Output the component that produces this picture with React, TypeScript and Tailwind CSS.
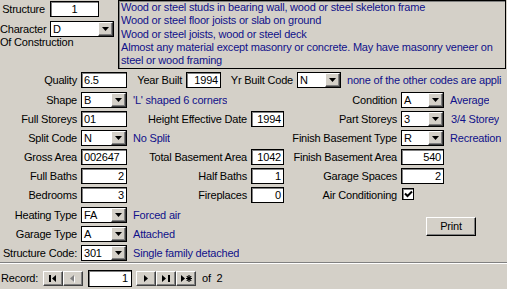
import React from "react";

type Kids = { children?: React.ReactNode };

const Label = ({ w, children }: { w: string } & Kids) => (
  <div className={`${w} h-4 shrink-0 flex items-center justify-end pr-[4px] whitespace-nowrap`}>
    {children}
  </div>
);

const Box = ({ w, value, align = "left" }: { w: string; value: string; align?: "left" | "right" | "center" }) => (
  <div
    className={`${w} h-4 shrink-0 bg-white border border-black shadow-[inset_1px_1px_0_#808080] flex items-center px-[2px] ${
      align === "right" ? "justify-end" : align === "center" ? "justify-center" : ""
    }`}
  >
    {value}
  </div>
);

const DropBtn = () => (
  <div className="w-[15px] h-full bg-[#d4d0c8] border-t border-l border-t-white border-l-white border-b border-r border-b-[#404040] border-r-[#404040] shadow-[inset_-1px_-1px_0_#808080] flex items-center justify-center">
    <svg width="7" height="4" viewBox="0 0 7 4">
      <path d="M0 0h7L3.5 4z" fill="#000" />
    </svg>
  </div>
);

const Combo = ({ w, value }: { w: string; value: string }) => (
  <div className={`${w} h-4 shrink-0 bg-white border border-black flex`}>
    <div className="flex-1 pl-[2px] flex items-center">{value}</div>
    <DropBtn />
  </div>
);

const Note = ({ cls = "", children }: { cls?: string } & Kids) => (
  <div className={`h-4 flex items-center text-[#10108a] whitespace-nowrap overflow-hidden ${cls}`}>{children}</div>
);

const Seg2 = ({ children }: Kids) => <div className="w-[168px] shrink-0 flex">{children}</div>;

const Check = () => (
  <div className="ml-px mt-px w-[12px] h-[12px] bg-white border border-black shadow-[inset_1px_1px_0_#808080] flex items-center justify-center">
    <svg width="9" height="8" viewBox="0 0 9 8">
      <path d="M1 3.5l2.5 2.5L8 1.5" stroke="#000" strokeWidth="2" fill="none" />
    </svg>
  </div>
);

const NavBtn = ({ children }: Kids) => (
  <div className="w-[20px] h-[15px] shrink-0 bg-[#d4d0c8] border-t border-l border-t-white border-l-white border-b border-r border-b-[#404040] border-r-[#404040] shadow-[inset_-1px_-1px_0_#808080] flex items-center justify-center">
    {children}
  </div>
);

const App = () => {
  return (
    <div className="w-[507px] h-[289px] overflow-hidden bg-[#d4d0c8] text-black font-['Liberation_Sans',Arial,sans-serif] text-[11px] tracking-[-0.2px] leading-none">
      {/* header: structure / character + description */}
      <div className="flex h-[69px]">
        <div className="w-[118px] shrink-0">
          <div className="flex mt-px">
            <div className="w-[50px] h-4 flex items-center justify-end pr-[5px]">Structure</div>
            <Box w="w-[49px]" value="1" align="center" />
          </div>
          <div className="flex mt-[4px]">
            <div className="w-[50px] h-4 flex items-center">Character</div>
            <Combo w="w-[64px]" value="D" />
          </div>
          <div className="leading-[13px] -mt-px whitespace-nowrap">Of Construction</div>
        </div>
        <div className="w-[388px] h-[69px] border border-black shadow-[inset_1px_1px_0_#808080] px-[2px] leading-[13.25px] text-[#10108a]">
          <div>Wood or steel studs in bearing wall, wood or steel skeleton frame</div>
          <div>Wood or steel floor joists or slab on ground</div>
          <div>Wood or steel joists, wood or steel deck</div>
          <div>Almost any material except masonry or concrete. May have masonry veneer on</div>
          <div>steel or wood framing</div>
        </div>
      </div>

      {/* main rows */}
      <div className="flex flex-col gap-[3px] mt-[3px]">
        <div className="flex">
          <Label w="w-[81px]">Quality</Label>
          <Box w="w-[46px]" value="6.5" />
          <Label w="w-[59px]">Year Built</Label>
          <Box w="w-[35px]" value="1994" align="right" />
          <Label w="w-[76px]">Yr Built Code</Label>
          <Combo w="w-[44px]" value="N" />
          <Note cls="pl-[6px] w-[162px]">none of the other codes are appli</Note>
        </div>

        <div className="flex mt-px">
          <Label w="w-[81px]">Shape</Label>
          <Combo w="w-[46px]" value="B" />
          <Seg2>
            <Note cls="pl-[6px]">'L' shaped 6 corners</Note>
          </Seg2>
          <Label w="w-[106px]">Condition</Label>
          <Combo w="w-[43px]" value="A" />
          <Note cls="pl-[6px]">Average</Note>
        </div>

        <div className="flex">
          <Label w="w-[81px]">Full Storeys</Label>
          <Box w="w-[46px]" value="01" />
          <Seg2>
            <Label w="w-[124px]">Height Effective Date</Label>
            <Box w="w-[33px]" value="1994" align="right" />
          </Seg2>
          <Label w="w-[106px]">Part Storeys</Label>
          <Combo w="w-[43px]" value="3" />
          <Note cls="pl-[7px]">3/4 Storey</Note>
        </div>

        <div className="flex">
          <Label w="w-[81px]">Split Code</Label>
          <Combo w="w-[46px]" value="N" />
          <Seg2>
            <Note cls="pl-[6px]">No Split</Note>
          </Seg2>
          <Label w="w-[106px]">Finish Basement Type</Label>
          <Combo w="w-[43px]" value="R" />
          <Note cls="pl-[6px]">Recreation</Note>
        </div>

        <div className="flex">
          <Label w="w-[81px]">Gross Area</Label>
          <Box w="w-[46px]" value="002647" />
          <Seg2>
            <Label w="w-[124px]">Total Basement Area</Label>
            <Box w="w-[33px]" value="1042" align="right" />
          </Seg2>
          <Label w="w-[106px]">Finish Basement Area</Label>
          <Box w="w-[43px]" value="540" align="right" />
        </div>

        <div className="flex">
          <Label w="w-[81px]">Full Baths</Label>
          <Box w="w-[46px]" value="2" align="right" />
          <Seg2>
            <Label w="w-[124px]">Half Baths</Label>
            <Box w="w-[33px]" value="1" align="right" />
          </Seg2>
          <Label w="w-[106px]">Garage Spaces</Label>
          <Box w="w-[43px]" value="2" align="right" />
        </div>

        <div className="flex">
          <Label w="w-[81px]">Bedrooms</Label>
          <Box w="w-[46px]" value="3" align="right" />
          <Seg2>
            <Label w="w-[124px]">Fireplaces</Label>
            <Box w="w-[33px]" value="0" align="right" />
          </Seg2>
          <Label w="w-[106px]">Air Conditioning</Label>
          <Check />
        </div>
      </div>

      {/* lower rows + print */}
      <div className="flex mt-[4px]">
        <div className="w-[426px] shrink-0 flex flex-col gap-[3px]">
          <div className="flex">
            <Label w="w-[81px]">Heating Type</Label>
            <Combo w="w-[46px]" value="FA" />
            <Note cls="pl-[6px]">Forced air</Note>
          </div>
          <div className="flex">
            <Label w="w-[81px]">Garage Type</Label>
            <Combo w="w-[46px]" value="A" />
            <Note cls="pl-[6px]">Attached</Note>
          </div>
          <div className="flex">
            <Label w="w-[81px]">Structure Code:</Label>
            <Combo w="w-[46px]" value="301" />
            <Note cls="pl-[6px]">Single family detached</Note>
          </div>
        </div>
        <div className="mt-[10px] w-[50px] h-[19px] border-t border-l border-t-white border-l-white border-b border-r border-b-black border-r-black shadow-[inset_-1px_-1px_0_#808080] flex items-center justify-center">
          Print
        </div>
      </div>

      {/* record navigator */}
      <div className="mt-px h-px bg-[#808080]" />
      <div className="h-px bg-white" />
      <div className="flex items-center pt-[6px]">
        <div className="w-[43px] pl-px">Record:</div>
        <NavBtn>
          <svg width="8" height="7" viewBox="0 0 8 7">
            <path d="M0 0h2v7H0zM7 0v7L3 3.5z" fill="#000" />
          </svg>
        </NavBtn>
        <NavBtn>
          <svg width="6" height="8" viewBox="0 0 6 8">
            <path d="M5 1v7L1 4.5z" fill="#fff" />
            <path d="M4 0v7L0 3.5z" fill="#808080" />
          </svg>
        </NavBtn>
        <div className="ml-[5px] w-[44px] h-[17px] bg-white border border-black shadow-[inset_1px_1px_0_#808080] flex items-center justify-end pr-[3px]">
          1
        </div>
        <div className="ml-[4px] flex">
          <NavBtn>
            <svg width="4" height="7" viewBox="0 0 4 7">
              <path d="M0 0v7l4-3.5z" fill="#000" />
            </svg>
          </NavBtn>
          <NavBtn>
            <svg width="8" height="7" viewBox="0 0 8 7">
              <path d="M0 0v7l4-3.5zM6 0h2v7H6z" fill="#000" />
            </svg>
          </NavBtn>
          <NavBtn>
            <svg width="11" height="7" viewBox="0 0 11 7">
              <path d="M0 0v7l4-3.5z" fill="#000" />
              <path d="M8 0v7M5 3.5h6M5.8 1.2l4.4 4.6M10.2 1.2l-4.4 4.6" stroke="#000" strokeWidth="1.2" />
            </svg>
          </NavBtn>
        </div>
        <div className="ml-[6px]">of&nbsp;&nbsp;2</div>
      </div>
    </div>
  );
};

export default App;
